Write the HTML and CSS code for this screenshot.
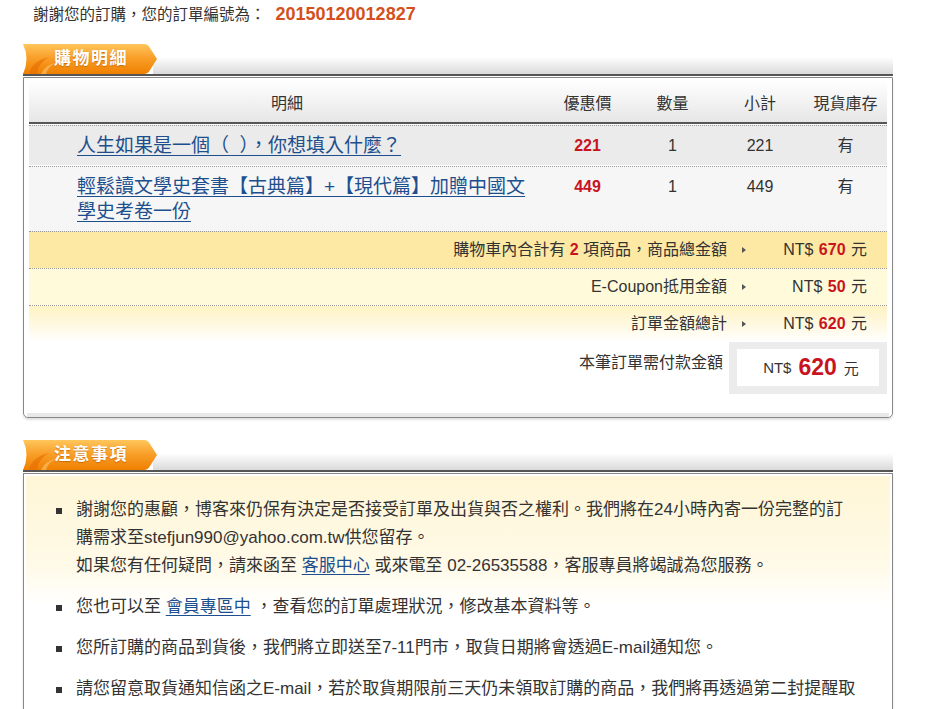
FILE: index.html
```html
<!DOCTYPE html>
<html lang="zh-Hant">
<head>
<meta charset="utf-8">
<title>訂購完成</title>
<link rel="stylesheet" href="styles.css">
</head>
<body>
<div class="page">
  <div class="thanks">謝謝您的訂購，您的訂單編號為：<span class="order-no">20150120012827</span></div>

  <section class="panel">
    <div class="panel-head">
      <div class="tab">
        <svg width="134" height="30" viewBox="0 0 134 30">
          <defs>
            <linearGradient id="tabg1" x1="0" y1="0" x2="0" y2="1">
              <stop offset="0" stop-color="#ffc65c"/>
              <stop offset="0.45" stop-color="#f9a02a"/>
              <stop offset="1" stop-color="#ef8000"/>
            </linearGradient>
          </defs>
          <path d="M0 0H121Q125 0 127 4L134 15L127 26Q125 30 121 30H0Q7 15 0 0Z" fill="url(#tabg1)"/>
          <path d="M6 30Q9 17 26 13Q15 19 14 30Z" fill="#e66a00" opacity="0.55"/>
          <path d="M18 30Q21 22 32 19Q24 24 23 30Z" fill="#ffd28a" opacity="0.5"/>
        </svg>
        <span class="tab-label">購物明細</span>
      </div>
      <div class="head-bar"></div>
    </div>
    <div class="panel-box">
      <div class="cart">
        <div class="cart-row cart-head">
          <div>明細</div>
          <div>優惠價</div>
          <div>數量</div>
          <div>小計</div>
          <div>現貨庫存</div>
        </div>
        <div class="cart-row item odd">
          <div class="c-name"><a class="item-link" href="#">人生如果是一個（&nbsp; ），你想填入什麼？</a></div>
          <div class="price">221</div>
          <div>1</div>
          <div>221</div>
          <div>有</div>
        </div>
        <div class="cart-row item even">
          <div class="c-name"><a class="item-link" href="#">輕鬆讀文學史套書【古典篇】+【現代篇】加贈中國文<br>學史考卷一份</a></div>
          <div class="price">449</div>
          <div>1</div>
          <div>449</div>
          <div>有</div>
        </div>
      </div>
      <div class="summary">
        <div class="sum-row s1">
          <div class="sum-label">購物車內合計有 <b class="red">2</b> 項商品，商品總金額</div>
          <div class="sum-arrow"><span class="tri"></span></div>
          <div class="sum-value">NT$ <b class="red">670</b> 元</div>
        </div>
        <div class="sum-row s2">
          <div class="sum-label">E-Coupon抵用金額</div>
          <div class="sum-arrow"><span class="tri"></span></div>
          <div class="sum-value">NT$ <b class="red">50</b> 元</div>
        </div>
        <div class="sum-row s3">
          <div class="sum-label">訂單金額總計</div>
          <div class="sum-arrow"><span class="tri"></span></div>
          <div class="sum-value">NT$ <b class="red">620</b> 元</div>
        </div>
        <div class="pay-row">
          <div class="pay-label">本筆訂單需付款金額</div>
          <div class="pay-frame">
            <div class="pay-box">NT$<b class="pay-num">620</b>元</div>
          </div>
        </div>
      </div>
      <div class="panel-foot"></div>
    </div>
  </section>

  <section class="panel">
    <div class="panel-head">
      <div class="tab">
        <svg width="134" height="30" viewBox="0 0 134 30">
          <defs>
            <linearGradient id="tabg2" x1="0" y1="0" x2="0" y2="1">
              <stop offset="0" stop-color="#ffc65c"/>
              <stop offset="0.45" stop-color="#f9a02a"/>
              <stop offset="1" stop-color="#ef8000"/>
            </linearGradient>
          </defs>
          <path d="M0 0H121Q125 0 127 4L134 15L127 26Q125 30 121 30H0Q7 15 0 0Z" fill="url(#tabg2)"/>
          <path d="M6 30Q9 17 26 13Q15 19 14 30Z" fill="#e66a00" opacity="0.55"/>
          <path d="M18 30Q21 22 32 19Q24 24 23 30Z" fill="#ffd28a" opacity="0.5"/>
        </svg>
        <span class="tab-label">注意事項</span>
      </div>
      <div class="head-bar"></div>
    </div>
    <div class="panel-box notes-box">
      <div class="notes-bg">
        <ul class="notes">
          <li><div class="note-text">謝謝您的惠顧，博客來仍保有決定是否接受訂單及出貨與否之權利。我們將在24小時內寄一份完整的訂<br>購需求至stefjun990@yahoo.com.tw供您留存。<br>如果您有任何疑問，請來函至 <a href="#">客服中心</a> 或來電至 02-26535588，客服專員將竭誠為您服務。</div></li>
          <li><div class="note-text">您也可以至 <a href="#">會員專區中</a> ，查看您的訂單處理狀況，修改基本資料等。</div></li>
          <li><div class="note-text">您所訂購的商品到貨後，我們將立即送至7-11門市，取貨日期將會透過E-mail通知您。</div></li>
          <li><div class="note-text">請您留意取貨通知信函之E-mail，若於取貨期限前三天仍未領取訂購的商品，我們將再透過第二封提醒取</div></li>
        </ul>
      </div>
    </div>
  </section>
</div>
</body>
</html>
```

FILE: styles.css
```css
body {
  margin: 0;
  background: #fff;
  color: #333;
  font-family: "Liberation Sans", "Noto Sans CJK TC", sans-serif;
}

.page {
  width: 870px;
  margin-left: 23px;
}

.thanks {
  padding-left: 10px;
  height: 28px;
  line-height: 28px;
  font-size: 15.5px;
}

.order-no {
  margin-left: 10px;
  font-size: 18px;
  font-weight: bold;
  color: #d4501c;
}

.panel + .panel {
  margin-top: 22px;
}

.panel-head {
  display: flex;
  align-items: flex-end;
  height: 30px;
  margin-top: 16px;
  margin-bottom: 1px;
  border-bottom: 2px solid #555;
}

.tab {
  position: relative;
  flex-shrink: 0;
  width: 134px;
  height: 30px;
  z-index: 1;
}

.tab svg {
  position: absolute;
  left: 0;
  top: 0;
}

.tab-label {
  position: relative;
  display: block;
  padding-left: 31px;
  line-height: 30px;
  font-size: 17px;
  font-weight: bold;
  letter-spacing: 1.5px;
  color: #fff;
  text-shadow: 0 1px 1px rgba(170, 75, 0, 0.55);
}

.head-bar {
  flex: 1;
  height: 17px;
  margin-left: -4px;
  background: linear-gradient(#ffffff, #dadada);
}

.panel-box {
  border: 1px solid #888;
  border-radius: 0 0 5px 5px;
  box-shadow: 0 2px 2px rgba(0, 0, 0, 0.12);
  padding: 0 5px;
}

/* cart table */
.cart-row {
  display: grid;
  grid-template-columns: 516px 85px 85px 90px 81px;
  text-align: center;
  font-size: 16px;
}

.cart-head {
  margin-top: 2px;
  padding-top: 6px;
  height: 36px;
  line-height: 36px;
  background: linear-gradient(#ffffff, #e6e6e6);
  border-bottom: 2px solid #555;
}

.item {
  margin-top: 1px;
  border-top: 1px dotted #999;
  padding: 7px 0;
  line-height: 25px;
}

.item.odd {
  background: #ebebeb;
}

.item.even {
  background: #f6f6f6;
}

.c-name {
  text-align: left;
  padding-left: 48px;
  padding-right: 8px;
  font-size: 19px;
  line-height: 25px;
}

.item-link {
  color: #1d4f8e;
  text-decoration: underline;
  text-underline-offset: 3px;
}

.price {
  font-weight: bold;
  color: #c8141e;
}

/* summary */
.sum-row {
  display: flex;
  align-items: center;
  height: 36px;
  border-top: 1px dotted #999;
  padding-right: 20px;
  font-size: 16px;
  line-height: 34px;
}

.s1 {
  background: #fde9a3;
}

.s2 {
  background: #fffbda;
}

.s3 {
  background: linear-gradient(#fff2c2, #ffffff);
}

.sum-label {
  flex: 1;
  text-align: right;
}

.sum-arrow {
  width: 40px;
  padding-left: 15px;
  box-sizing: border-box;
  display: flex;
  align-items: center;
}

.tri {
  display: block;
  width: 0;
  height: 0;
  border-left: 4px solid #555;
  border-top: 3px solid transparent;
  border-bottom: 3px solid transparent;
}

.sum-value {
  width: 100px;
  text-align: right;
  word-spacing: 1px;
}

.red {
  color: #c8141e;
}

.pay-row {
  display: flex;
  justify-content: flex-end;
  align-items: flex-start;
}

.pay-label {
  margin-top: 10px;
  margin-right: 6px;
  line-height: 22px;
  font-size: 16px;
}

.pay-frame {
  width: 142px;
  padding: 7px 8px 8px;
  background: #ececec;
}

.pay-box {
  display: flex;
  align-items: center;
  justify-content: center;
  height: 37px;
  padding-left: 6px;
  background: #fff;
  font-size: 15px;
}

.pay-num {
  margin: 0 7px;
  font-size: 23px;
  color: #c8141e;
}

.panel-foot {
  height: 19px;
  margin: 0 -2px;
  border-bottom: 4px solid #e8e8e8;
}

/* notes */
.notes-box {
  padding: 2px;
  border-radius: 0;
}

.notes-bg {
  background: linear-gradient(#fff6d6 0, #fffae8 90px, #ffffff 130px);
  padding: 20px 0 30px;
}

.notes {
  list-style: none;
  margin: 0;
  padding: 0;
}

.notes li {
  display: flex;
  margin-bottom: 13px;
  font-size: 17px;
  line-height: 28px;
}

.notes li::before {
  content: "";
  flex-shrink: 0;
  width: 6px;
  height: 6px;
  margin: 12px 14px 0 30px;
  background: #333;
}

.note-text {
  white-space: nowrap;
}

.note-text a {
  color: #1d4f8e;
  text-decoration: underline;
  text-underline-offset: 3px;
}
```
